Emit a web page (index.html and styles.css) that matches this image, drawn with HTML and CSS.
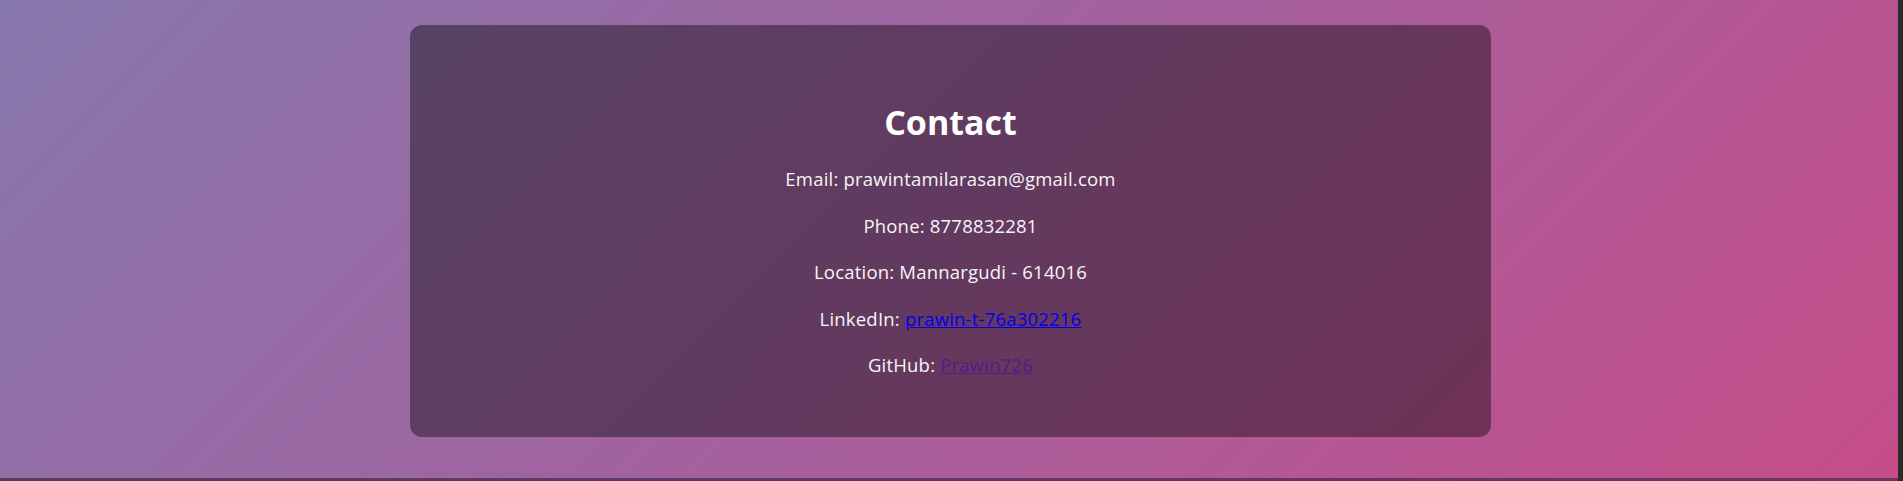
FILE: index.html
```html
<!DOCTYPE html>
<html lang="en">
<head>
<meta charset="utf-8">
<title>Contact</title>
<link rel="stylesheet" href="styles.css">
</head>
<body>
<div class="frame">
  <main class="viewport">
    <section class="hero">
      <div class="card">
        <h2 class="title">Contact</h2>
        <p class="line">Email: prawintamilarasan@gmail.com</p>
        <p class="line">Phone: 8778832281</p>
        <p class="line">Location: Mannargudi - 614016</p>
        <p class="line">LinkedIn: <a class="link" href="#linkedin">prawin-t-76a302216</a></p>
        <p class="line">GitHub: <a class="link visited" href="#github">Prawin726</a></p>
      </div>
    </section>
    <div class="next"></div>
  </main>
  <div class="rail"></div>
</div>
</body>
</html>
```

FILE: styles.css
```css
html, body {
  margin: 0;
  padding: 0;
  height: 100%;
  overflow: hidden;
}

body {
  font-family: "Open Sans", "Noto Sans", sans-serif;
  background: #2c2a2d;
}

.frame {
  display: flex;
  height: 481px;
}

.viewport {
  flex: 1;
  display: flex;
  flex-direction: column;
}

.rail {
  width: 5px;
  background: #2c2a2d;
}

.hero {
  height: 478px;
  background: linear-gradient(135deg, #8778ad 0%, #a163a0 45%, #c54d88 100%);
  display: flex;
  justify-content: center;
  align-items: flex-start;
  padding-top: 25px;
  box-sizing: border-box;
}

.next {
  height: 3px;
  background: linear-gradient(90deg, #5a3d62, #6e3560);
}

.card {
  width: 1081px;
  box-sizing: border-box;
  margin-left: 3px;
  padding: 74px 40px 58px;
  border-radius: 12px;
  background: rgba(0, 0, 0, 0.4);
  text-align: center;
  color: #f8f4f8;
}

.title {
  margin: 3px 0 21px;
  font-size: 34px;
  line-height: 41px;
  font-weight: 700;
  color: #ffffff;
}

.line {
  margin: 0 0 17.6px;
  font-size: 18.5px;
  letter-spacing: 0.2px;
  line-height: 29px;
}

.line:last-child {
  margin-bottom: 0;
}

.link {
  color: #0000ee;
  text-decoration: underline;
}

.link.visited {
  color: #551a8b;
}
```
